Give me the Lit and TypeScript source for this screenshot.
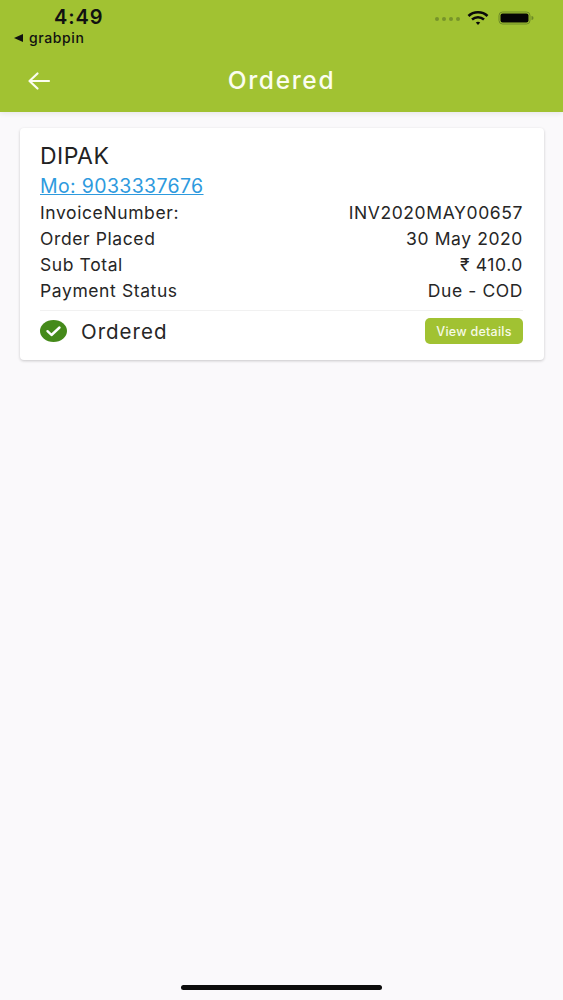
import { LitElement, html, css } from "lit";
import { customElement } from "lit/decorators.js";

@customElement("app-root")
export class AppRoot extends LitElement {
  static styles = css`
    :host { display: block; font-family: Inter, "Liberation Sans", sans-serif; color: #222; }
    .page { height: 1000px; background: #faf9fb; display: flex; flex-direction: column; overflow: hidden; }
    .header { height: 112px; flex: none; background: #a1c232; box-shadow: 0 2px 5px rgba(0,0,0,.07); display: flex; flex-direction: column; box-sizing: border-box; }
    .status { height: 50px; display: flex; justify-content: space-between; padding: 7px 29px 0 14px; box-sizing: border-box; }
    .left { display: flex; flex-direction: column; color: #111; }
    .time { font-size: 20px; line-height: 21px; font-weight: 600; margin-left: 40px; letter-spacing: .9px; }
    .back-app { font-size: 14px; line-height: 16px; margin-top: 2px; font-weight: 500; display: flex; align-items: center; gap: 6px; letter-spacing: .6px; }
    .tri { width: 0; height: 0; border-top: 4px solid transparent; border-bottom: 4px solid transparent; border-right: 9px solid #111; }
    .right { display: flex; align-items: center; height: 36px; gap: 7px; margin-top: -7px; }
    .dots { display: flex; gap: 3px; margin-top: 2px; }
    .dots i { width: 4px; height: 4px; border-radius: 50%; background: #77942a; }
    .bar { flex: 1; display: grid; grid-template-columns: 1fr auto 1fr; align-items: center; padding: 0 27px; }
    .bar svg { display: block; }
    .title { color: #fbfdf0; font-size: 24.5px; font-weight: 500; letter-spacing: 1.65px; margin-top: -2px; }
    .card { margin: 16px 19px 0 20px; height: 232px; box-sizing: border-box; background: #fff; border-radius: 4px; box-shadow: 0 1px 3px rgba(0,0,0,.2); padding: 15px 21px 0 20px; display: flex; flex-direction: column; flex: none; }
    .name { font-size: 23px; line-height: 26px; font-weight: 400; letter-spacing: .45px; }
    .phone { font-size: 19.5px; line-height: 24px; color: #2e9ade; text-decoration: underline; margin-top: 5px; align-self: flex-start; letter-spacing: .35px; }
    .rows { margin-top: 2px; display: flex; flex-direction: column; }
    .row { display: flex; justify-content: space-between; font-size: 17.5px; line-height: 26px; letter-spacing: .6px; color: #262626; }
    .foot { border-top: 1px solid #f1f1f1; margin-top: 6px; padding-top: 7px; display: flex; align-items: center; justify-content: space-between; }
    .st { display: flex; align-items: center; gap: 14px; font-size: 20.5px; letter-spacing: 1px; color: #262626; }
    .btn { background: #a1c232; color: #f6fae6; font-size: 12.5px; font-weight: 500; height: 26px; width: 98px; border-radius: 5px; display: flex; align-items: center; justify-content: center; letter-spacing: .25px; }
    .home { margin-top: auto; margin-bottom: 10px; align-self: center; width: 201px; height: 5px; border-radius: 3px; background: #0c0c0c; }
  `;

  render() {
    const rows = [
      ["InvoiceNumber:", "INV2020MAY00657"],
      ["Order Placed", "30 May 2020"],
      ["Sub Total", "₹ 410.0"],
      ["Payment Status", "Due - COD"],
    ];
    return html`<div class="page">
      <div class="header">
        <div class="status">
          <div class="left">
            <div class="time">4:49</div>
            <div class="back-app"><span class="tri"></span>grabpin</div>
          </div>
          <div class="right">
            <div class="dots"><i></i><i></i><i></i><i></i></div>
            <svg width="22" height="16" viewBox="0 0 22 16" fill="none" stroke="#0a0a0a" stroke-width="2.6">
              <path d="M1.5 6 C6.5 1 15.5 1 20.5 6" />
              <path d="M5 9.5 C8.5 6.5 13.5 6.5 17 9.5" />
              <path d="M8.8 12.6 L11 15 L13.2 12.6 C12 11.5 10 11.5 8.8 12.6Z" fill="#0a0a0a" stroke="none" />
            </svg>
            <svg width="36" height="14" viewBox="0 0 36 14" style="margin-left:2px">
              <rect x="1" y="1" width="31" height="12" rx="3.5" fill="none" stroke="#6d8a26" />
              <rect x="2.5" y="2.5" width="28" height="9" rx="2" fill="#050505" />
              <path d="M33.5 5 a2 2 0 0 1 0 4z" fill="#6d8a26" />
            </svg>
          </div>
        </div>
        <div class="bar">
          <svg width="24" height="20" viewBox="0 0 24 20" fill="none" stroke="#fbfdf0" stroke-width="2.2" stroke-linecap="round" stroke-linejoin="round">
            <path d="M22 10 H3 M10.5 2.5 L2.5 10 L10.5 17.5" />
          </svg>
          <div class="title">Ordered</div>
          <span></span>
        </div>
      </div>
      <div class="card">
        <div class="name">DIPAK</div>
        <div class="phone">Mo: 9033337676</div>
        <div class="rows">
          ${rows.map((r) => html`<div class="row"><span>${r[0]}</span><span>${r[1]}</span></div>`)}
        </div>
        <div class="foot">
          <div class="st">
            <svg width="27" height="22" viewBox="0 0 27 22">
              <ellipse cx="13.5" cy="11" rx="13.5" ry="11" fill="#458a1a" />
              <path d="M7.5 11.2 L11.5 15 L19.5 7.5" fill="none" stroke="#fff" stroke-width="2.4" stroke-linecap="round" stroke-linejoin="round" />
            </svg>
            Ordered
          </div>
          <div class="btn">View details</div>
        </div>
      </div>
      <div class="home"></div>
    </div>`;
  }
}
